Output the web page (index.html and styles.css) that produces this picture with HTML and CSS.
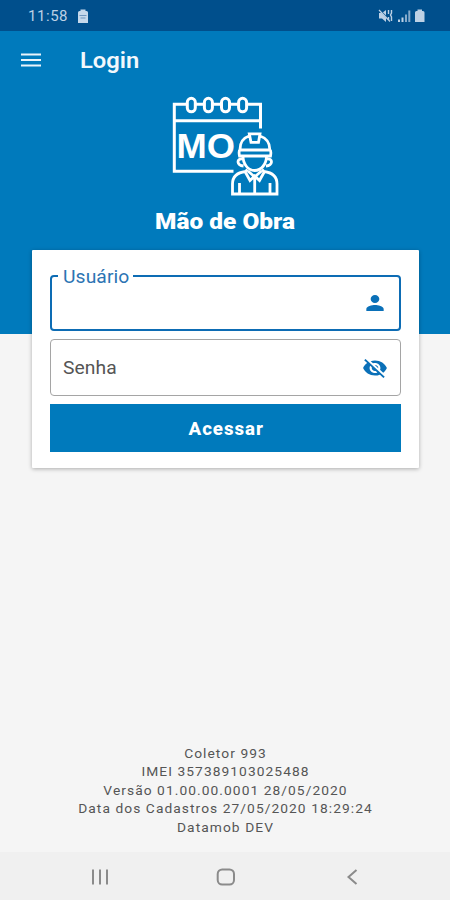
FILE: index.html
```html
<!DOCTYPE html>
<html lang="pt-BR">
<head>
<meta charset="utf-8">
<title>Login</title>
<link rel="stylesheet" href="styles.css">
</head>
<body>
<div class="screen">
  <header class="status">
    <span class="time">11:58</span>
    <svg class="charge" width="12" height="14" viewBox="0 0 12 14"><path d="M1 3.500Q1 2 2.500 2H3.500V.5H8.500V2H9.500Q11 2 11 3.500V14H1Z" fill="#c5d8eb"/><path d="M2.500 6.500H9.500M3.500 9H8.500" stroke="#6f96be" stroke-width="1.200"/></svg>
    <svg class="signals" width="48" height="14" viewBox="0 0 48 14" fill="#bdd1e5"><path d="M1 4H4L8 1V13L4 9.500H1Z"/><path d="M1 .5 13 12.500" stroke="#004f8c" stroke-width="1.500"/><path d="M1 1 12 12.500" stroke="#bdd1e5" stroke-width="1.200"/><path d="M10.500 1V5M10.500 8V11M13.500 1V4L12.500 6 13.500 8V12" fill="none" stroke="#bdd1e5" stroke-width="1.400"/><path d="M20 10.500h2v2.500h-2ZM23.500 8.500h2v4.500h-2Z"/><path d="M27 5.500h2v7.500h-2ZM30.300 1.500h2v11.500h-2Z" opacity=".7"/><path d="M37 3.500Q37 2 38.500 2H39.500V.5H44V2H45Q46.500 2 46.500 3.500V13H37Z"/></svg>
  </header>
  <section class="hero">
    <div class="appbar">
      <svg class="menu" width="20" height="14" viewBox="0 0 20 14"><path d="M0 1.500H20M0 7H20M0 12.500H20" stroke="#e9f4fb" stroke-width="2.100"/></svg>
      <h1 class="title">Login</h1>
    </div>
    <svg class="logo" width="112" height="102" viewBox="169 96 112 102" fill="none" stroke="#fff" stroke-width="3">
      <path d="M187 104.300H174.300V171.300H233.500M195.500 104.300H204M212.500 104.300H221M230 104.300H238M247 104.300H260.500V128.500M174.300 120.800H260.500"/>
      <rect x="187.300" y="98.300" width="8" height="13.500" rx="4"/>
      <rect x="204.400" y="98.300" width="8" height="13.500" rx="4"/>
      <rect x="221.500" y="98.300" width="8" height="13.500" rx="4"/>
      <rect x="238.600" y="98.300" width="8" height="13.500" rx="4"/>
      <text class="logo-text" x="176.500" y="158" textLength="58.500" lengthAdjust="spacingAndGlyphs">MO</text>
      <g stroke-width="2.800">
        <path d="M249 136C243 138 240 143 240 149.500Q238.500 151 239.500 156H270.500Q271.500 151 269.800 149.500C269.800 143 266 138 260 136M240 150H270M249.300 133.800H260L258.500 142.300H251Z"/>
        <path d="M243 156C243 164 248 170.500 254.700 170.500S266.500 164 266.500 156M242 159C236.500 158.500 236.500 165.500 243.500 166M267.500 159C273 158.500 273 165.500 266 166"/>
        <path d="M247.500 169.500 245.500 171.500C238 172.500 232.500 176.500 232.500 184V194H277V184C277 176.500 271.500 172.500 264 171.500L262 169.500M245 171.500 250 180.500 254.700 176 259.500 180.500 264.500 171.500M248 171 254.700 177 261.500 171M254.700 176V194M239.500 183V194M270 183V194"/>
      </g>
    </svg>
    <h2 class="name">Mão de Obra</h2>
  </section>
  <main class="card">
    <div class="field active">
      <label class="floating"><span class="wide">Usuário</span></label>
      <svg class="icon" width="26" height="24" viewBox="0 0 24 24" preserveAspectRatio="none" fill="#0a70b8"><path d="M12 12c2.210 0 4-1.790 4-4s-1.790-4-4-4-4 1.790-4 4 1.790 4 4 4zm0 2c-2.670 0-8 1.340-8 4v2h16v-2c0-2.660-5.330-4-8-4z"/></svg>
    </div>
    <div class="field">
      <label class="wide">Senha</label>
      <svg class="icon" width="26" height="24" viewBox="0 0 24 24" preserveAspectRatio="none" fill="#0a70b8"><path d="M12 7c2.760 0 5 2.240 5 5 0 .65-.13 1.260-.36 1.830l2.920 2.920c1.510-1.260 2.700-2.890 3.430-4.750-1.730-4.390-6-7.500-11-7.500-1.400 0-2.740.25-3.980.7l2.160 2.160C10.740 7.130 11.350 7 12 7zM2 4.270l2.280 2.280.46.46C3.080 8.300 1.780 10.020 1 12c1.730 4.390 6 7.500 11 7.500 1.550 0 3.030-.3 4.380-.84l.42.42L19.730 22 21 20.730 3.270 3 2 4.270zM7.530 9.800l1.550 1.550c-.05.21-.08.43-.08.65 0 1.660 1.340 3 3 3 .22 0 .44-.03.65-.08l1.550 1.550c-.67.33-1.410.53-2.200.53-2.760 0-5-2.240-5-5 0-.79.2-1.530.53-2.200zm4.310-.78l3.150 3.150.02-.16c0-1.660-1.340-3-3-3l-.17.01z"/></svg>
    </div>
    <button class="submit"><span class="stretch">Acessar</span></button>
  </main>
  <footer class="info">
    <p>Coletor 993</p>
    <p>IMEI 357389103025488</p>
    <p>Versão 01.00.00.0001 28/05/2020</p>
    <p>Data dos Cadastros 27/05/2020 18:29:24</p>
    <p>Datamob DEV</p>
  </footer>
  <nav class="nav">
    <svg width="18" height="16" viewBox="0 0 18 16"><path d="M2 .5V15.500M9 .5V15.500M16 .5V15.500" stroke="#8b8b8b" stroke-width="2"/></svg>
    <svg class="home" width="20" height="18" viewBox="0 0 20 18"><rect x="1.700" y="1.500" width="16.300" height="15" rx="4.500" fill="none" stroke="#8b8b8b" stroke-width="2"/></svg>
    <svg width="12" height="16" viewBox="0 0 12 16"><path d="M10.500 1 2.500 8 10.500 15" fill="none" stroke="#8b8b8b" stroke-width="2"/></svg>
  </nav>
</div>
</body>
</html>
```
FILE: styles.css
```css
* { box-sizing: border-box; }
body, h1, h2, p { margin: 0; }
body { font-family: Roboto, "Liberation Sans", sans-serif; }
.screen { width: 450px; height: 900px; display: flex; flex-direction: column; background: #f5f5f5; }
.status { height: 31px; flex: none; display: flex; align-items: center; padding: 1px 24px 0 28px; background: #004f8c; }
.time { font-size: 15px; line-height: 20px; letter-spacing: .55px; color: #bdd1e5; }
.charge { margin-left: 9px; }
.signals { margin-left: auto; }
.hero { height: 303px; flex: none; display: flex; flex-direction: column; align-items: center; background: #007abc; }
.appbar { width: 100%; height: 58px; display: flex; align-items: center; padding-left: 21px; }
.title { margin: 2px 0 0 39px; font-size: 22px; line-height: 30px; font-weight: 600; color: #f2f8fc; transform: scaleX(1.08); transform-origin: left; }
.logo { margin-top: 7px; }
.logo-text { font: bold 35px "Liberation Sans", sans-serif; fill: #fff; stroke: none; }
.name { margin-top: 8px; font-size: 22px; line-height: 30px; font-weight: 900; color: #fff; transform: translateY(1px) scaleX(1.11); }
.card { width: 387px; height: 218px; flex: none; margin: -84px 0 0 32px; padding: 25px 18px 16px; background: #fff; box-shadow: 0 1px 4px rgba(0, 0, 0, .3); border-radius: 1px; }
.field { position: relative; height: 57px; margin-bottom: 8px; display: flex; align-items: center; justify-content: space-between; padding: 0 12px; border: 1px solid #a5a5a5; border-radius: 4px; font-size: 18px; letter-spacing: .1px; color: #555; }
.field.active { height: 56px; padding-right: 11px; border: 2px solid #0d6cb4; }
.wide { display: inline-block; transform: scaleX(1.07); transform-origin: left; }
.floating { position: absolute; left: 6px; top: -11px; width: 75px; padding-left: 5px; background: #fff; line-height: 22px; color: #2c74b3; }
.icon { margin-left: auto; }
.submit { display: block; width: 100%; height: 48px; border: 0; background: #007abc; color: #fff; font: 800 18px/49px Roboto, sans-serif; letter-spacing: .9px; padding: 0; }
.stretch { display: inline-block; transform: translateX(1px) scaleX(1.04); }
.info { margin-top: auto; padding-bottom: 15px; text-align: center; font-size: 13px; line-height: 18.5px; letter-spacing: 1px; color: #555; transform: translateX(.5px) scaleX(1.06); }
.nav { height: 48px; flex: none; display: flex; justify-content: space-between; align-items: center; padding: 2px 92px 0 91px; background: #f0f0f0; }
.home { margin-right: 4px; }
```
